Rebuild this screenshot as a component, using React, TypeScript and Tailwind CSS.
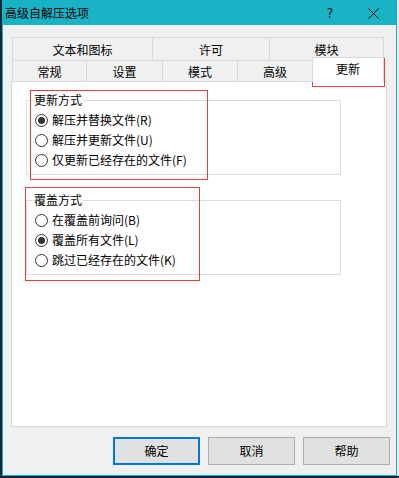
import React from "react";

const F = "font-['Noto_Sans_CJK_SC','Noto_Sans',sans-serif]";

function Radio({ checked, label }: { checked?: boolean; label: string }) {
  return (
    <div className="flex items-center h-[20px]">
      <div className="w-[13px] h-[13px] rounded-full border border-[#333] bg-white flex items-center justify-center">
        {checked && <div className="w-[7px] h-[7px] rounded-full bg-[#333]" />}
      </div>
      <span className="ml-[4px] text-[12px] leading-[14px] text-black">{label}</span>
    </div>
  );
}

function Group({ title, items, mt }: { title: string; items: { label: string; checked?: boolean }[]; mt: string }) {
  return (
    <div className={`relative ml-[14px] w-[315px] h-[75px] border border-[#dcdcdc] ${mt}`}>
      <span className="absolute -top-[9px] left-[6px] bg-white px-[1px] text-[12px] leading-[16px] text-black">{title}</span>
      <div className="flex flex-col pt-[9px] pl-[8px]">
        {items.map((it) => (
          <Radio key={it.label} label={it.label} checked={it.checked} />
        ))}
      </div>
    </div>
  );
}

export default function App() {
  const row1 = [
    { t: "文本和图标", w: "w-[140px]" },
    { t: "许可", w: "w-[117px]" },
    { t: "模块", w: "w-[115px]" },
  ];
  const row2 = [
    { t: "常规", w: "w-[74px]" },
    { t: "设置", w: "w-[76px]" },
    { t: "模式", w: "w-[75px]" },
    { t: "高级", w: "w-[75px]" },
  ];
  return (
    <div className={`relative w-[399px] h-[478px] bg-[#10283a] flex ${F}`}>
      <div className="ml-[2px] w-[395px] h-[476px] border border-[#18b3c5] bg-[#f0f0f0] flex flex-col">
        {/* title bar */}
        <div className="h-[24px] bg-[#18b3c5] flex items-center pl-[2px] shrink-0">
          <span className="text-[12px] leading-[16px] text-black flex-1">高级自解压选项</span>
          <span className="text-[13px] leading-[16px] text-black mr-[35px]">?</span>
          <svg width="11" height="11" viewBox="0 0 11 11" className="mr-[17px]">
            <path d="M0.5 0.5 L10.5 10.5 M10.5 0.5 L0.5 10.5" stroke="#000" strokeWidth="1" />
          </svg>
        </div>
        {/* body */}
        <div className="flex flex-col pt-[12px]">
          <div className="ml-[9px] flex flex-col">
            <div className="flex h-[23px]">
              {row1.map((r, i) => (
                <div
                  key={r.t}
                  className={`${r.w} border-t border-l border-[#d9d9d9] ${i === row1.length - 1 ? "border-r" : ""} flex items-center justify-center text-[12px] leading-[14px] text-black pt-[1px]`}
                >
                  {r.t}
                </div>
              ))}
            </div>
            <div className="flex h-[21px]">
              {row2.map((r) => (
                <div
                  key={r.t}
                  className={`${r.w} border-t border-l border-[#d9d9d9] flex items-center justify-center text-[12px] leading-[14px] text-black pt-[1px]`}
                >
                  {r.t}
                </div>
              ))}
              <div className="relative z-10 w-[72px] h-[25px] -mt-[3px] bg-white border-t border-l border-r border-[#d9d9d9] flex items-start justify-center pt-[4px] text-[12px] leading-[14px] text-black">
                更新
              </div>
            </div>
          </div>
          {/* panel */}
          <div className="ml-[8px] w-[376px] h-[346px] bg-white border border-[#d9d9d9] flex flex-col">
            <Group
              title="更新方式"
              mt="mt-[18px]"
              items={[
                { label: "解压并替换文件(R)", checked: true },
                { label: "解压并更新文件(U)" },
                { label: "仅更新已经存在的文件(F)" },
              ]}
            />
            <Group
              title="覆盖方式"
              mt="mt-[25px]"
              items={[
                { label: "在覆盖前询问(B)" },
                { label: "覆盖所有文件(L)", checked: true },
                { label: "跳过已经存在的文件(K)" },
              ]}
            />
          </div>
          {/* buttons */}
          <div className="flex justify-end gap-[8px] pr-[6px] mt-[10px]">
            <button className="w-[87px] h-[28px] bg-[#e1e1e1] border-2 border-[#0078d7] text-[12px] text-black">确定</button>
            <button className="w-[87px] h-[28px] bg-[#e1e1e1] border border-[#adadad] text-[12px] text-black">取消</button>
            <button className="w-[87px] h-[28px] bg-[#e1e1e1] border border-[#adadad] text-[12px] text-black">帮助</button>
          </div>
        </div>
      </div>
      <div className="w-[2px] h-[476px] bg-[#e9e9e9]" />

      {/* red annotation boxes */}
      <div className="absolute left-[312px] top-[58px] w-[73px] h-[29px] border border-[#e53d3d] pointer-events-none" />
      <div className="absolute left-[30px] top-[90px] w-[178px] h-[90px] border border-[#e53d3d] pointer-events-none" />
      <div className="absolute left-[25px] top-[187px] w-[175px] h-[94px] border border-[#e53d3d] pointer-events-none" />
    </div>
  );
}
